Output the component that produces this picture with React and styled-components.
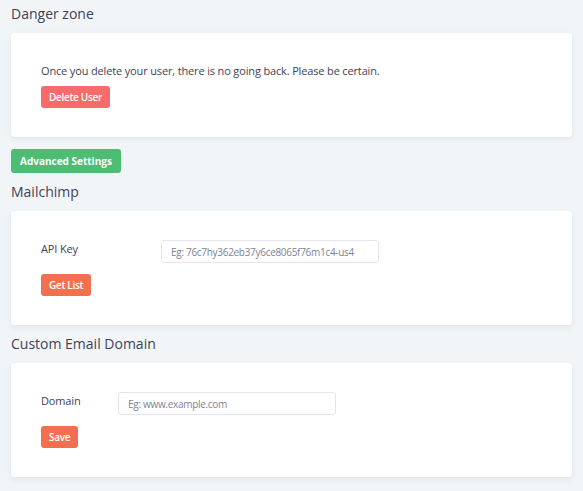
import React from "react";
import styled, { createGlobalStyle } from "styled-components";

const GlobalStyle = createGlobalStyle`
  html, body {
    margin: 0;
    padding: 0;
    background: #f2f5f8;
    font-family: "Open Sans", "Noto Sans", sans-serif;
    color: #3f4254;
  }
  * { box-sizing: border-box; }
`;

const Page = styled.div`
  width: 583px;
  padding: 0 11px 13px 11px;
`;

const SectionTitle = styled.h3`
  margin: 0;
  padding: ${(p) => (p.$first ? "3px 0 9px" : "8px 0 9px")};
  font-size: 14px;
  font-weight: 400;
  line-height: 21px;
  color: #3f4254;
`;

const Card = styled.div`
  background: #fff;
  border-radius: 4px;
  box-shadow: 0 2px 5px rgba(60, 70, 90, 0.1);
  padding: ${(p) => (p.$tight ? "30px" : "29px")} 30px 29px 30px;
  display: flex;
  flex-direction: column;
  align-items: flex-start;
`;

const Notice = styled.p`
  margin: -1px 0 6px;
  font-size: 11px;
  letter-spacing: -0.15px;
  line-height: 18px;
`;

const Button = styled.button`
  border: 0;
  border-radius: 3px;
  height: ${(p) => p.$h || 22}px;
  padding: 0 ${(p) => p.$px || 8}px;
  background: ${(p) => p.$bg};
  color: #fff;
  font-family: inherit;
  font-size: 10px;
  letter-spacing: ${(p) => (p.$weight === 700 ? "0" : "-0.3px")};
  font-weight: ${(p) => p.$weight || 600};
  cursor: pointer;
`;

const FieldRow = styled.div`
  display: flex;
  align-items: center;
  margin-bottom: 11px;
`;

const Label = styled.label`
  width: ${(p) => p.$w}px;
  font-size: 11px;
  letter-spacing: -0.15px;
  margin-top: -6px;
  color: #3f4254;
`;

const Input = styled.input`
  width: 218px;
  height: 23px;
  border: 1px solid #e4e6ef;
  border-radius: 3px;
  padding: 0 9px;
  font-family: inherit;
  font-size: 10px;
  letter-spacing: -0.3px;
  color: #3f4254;
  outline: none;
  &::placeholder {
    color: #7e8299;
  }
`;

const Spacer = styled.div`
  height: 11px;
`;

export default function App() {
  return (
    <>
      <GlobalStyle />
      <Page>
        <SectionTitle $first>Danger zone</SectionTitle>
        <Card $tight>
          <Notice>Once you delete your user, there is no going back. Please be certain.</Notice>
          <Button $bg="#f86b6b">Delete User</Button>
        </Card>
        <Spacer />
        <Button $bg="#4dbd74" $h={24} $px={9} $weight={700}>Advanced Settings</Button>
        <SectionTitle>Mailchimp</SectionTitle>
        <Card>
          <FieldRow>
            <Label $w={120}>API Key</Label>
            <Input placeholder="Eg: 76c7hy362eb37y6ce8065f76m1c4-us4" />
          </FieldRow>
          <Button $bg="#f3704f">Get List</Button>
        </Card>
        <SectionTitle>Custom Email Domain</SectionTitle>
        <Card>
          <FieldRow>
            <Label $w={77}>Domain</Label>
            <Input placeholder="Eg: www.example.com" />
          </FieldRow>
          <Button $bg="#f3704f">Save</Button>
        </Card>
      </Page>
    </>
  );
}
